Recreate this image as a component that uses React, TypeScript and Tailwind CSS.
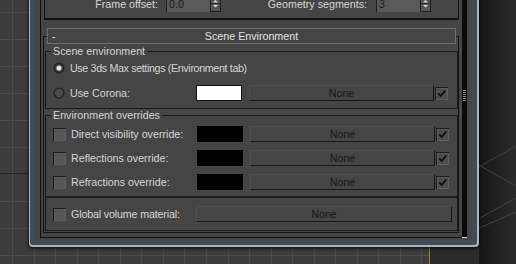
import React from "react"

const Radio = ({ on }: { on?: boolean }) => (
  <svg width="12" height="12" viewBox="0 0 12 12" className="shrink-0">
    <circle cx="6" cy="6" r="5.5" fill="#222" />
    <circle cx="6" cy="6" r="4.2" fill={on ? "#3a3a3a" : "#4c4c4c"} />
    {on && <circle cx="6" cy="6" r="2.6" fill="#e4e4e4" />}
  </svg>
)

const Check = ({ on }: { on?: boolean }) => (
  <svg width="13" height="13" viewBox="0 0 13 13" className="shrink-0">
    <rect x="0" y="0" width="13" height="13" fill="#1c1c1c" />
    <rect x="1" y="1" width="12" height="12" fill="#606060" />
    <rect x="1.5" y="1.5" width="10.5" height="10.5" fill={on ? "#4e4e4e" : "#575757"} />
    {on && <path d="M3.2 6.4 L5.6 9 L10.2 3.6" stroke="#0c0c0c" strokeWidth="1.7" fill="none" />}
  </svg>
)

const NoneBtn = ({ w }: { w: string }) => (
  <div className={`${w} h-[16px] shrink-0 flex items-center justify-center border border-t-[#505050] border-l-[#505050] border-r-[#161616] border-b-[#161616]`}>
    <span className="text-neutral-900">None</span>
  </div>
)

const Swatch = ({ white }: { white?: boolean }) =>
  white ? (
    <div className="w-[46px] h-[16px] shrink-0 border border-[#111] bg-white" />
  ) : (
    <div className="w-[46px] h-[16px] shrink-0 bg-black" />
  )

const Spinner = ({ value }: { value: string }) => (
  <div className="flex">
    <div className="w-[44px] h-[16px] bg-[#5a5a5a] border-t border-l border-[#1e1e1e] pl-[2px] flex items-center">
      <span className="text-neutral-900">{value}</span>
    </div>
    <svg width="11" height="16" viewBox="0 0 11 16">
      <rect x="0" y="0" width="11" height="16" fill="#1e1e1e" />
      <rect x="1" y="0" width="9" height="15" fill="#555" />
      <line x1="1" x2="10" y1="7.5" y2="7.5" stroke="#2a2a2a" />
      <path d="M3 6.5 L5.5 4 L8 6.5 Z" fill="#dcdcdc" />
      <path d="M3 9 L8 9 L5.5 11.5 Z" fill="#dcdcdc" />
    </svg>
  </div>
)

const Viewport = () => {
  const vx = Array.from({ length: 20 }, (_, i) => Math.round(12 + i * 21.55) + 0.5)
  const hy = [12, 39, 66, 93, 120, 147, 201, 228, 255]
  return (
    <svg className="absolute inset-0" width="516" height="264">
      <defs>
        <linearGradient id="sh" x1="0" x2="1" y1="0" y2="0">
          <stop offset="0" stopColor="#151515" />
          <stop offset="1" stopColor="#2b2b2b" />
        </linearGradient>
      </defs>
      <rect width="516" height="264" fill="#3c3c3c" />
      {vx.map((x) => (
        <line key={x} x1={x} x2={x} y1={0} y2={264} stroke="#4b4b4b" />
      ))}
      {hy.map((y) => (
        <line key={y} x1={0} x2={430} y1={y + 0.5} y2={y + 0.5} stroke="#4b4b4b" />
      ))}
      <line x1={0} x2={430} y1={173.5} y2={173.5} stroke="#262626" />
      <rect x="430" y="0" width="86" height="264" fill="#2b2b2b" />
      <rect x="479" y="0" width="37" height="264" fill="url(#sh)" />
      <g stroke="#454545" strokeWidth="1">
        <line x1="470" y1="172" x2="516" y2="146" />
        <line x1="470" y1="160" x2="516" y2="186" />
        <line x1="480" y1="218" x2="516" y2="198" />
        <line x1="470" y1="232" x2="516" y2="212" />
      </g>
      <line x1="429.5" x2="429.5" y1="0" y2="264" stroke="#9a843a" />
    </svg>
  )
}

const Row = ({ children, h }: { children: React.ReactNode; h: string }) => (
  <div className={`${h} flex items-center pl-[7px]`}>{children}</div>
)

export default function App() {
  return (
    <div className="relative w-[516px] h-[264px] overflow-hidden bg-[#3c3c3c] font-['Liberation_Sans',Arial,sans-serif] text-[10.7px] leading-none">
      <Viewport />
      <div className="absolute left-[29px] top-[-30px] w-[450px] rounded-b-[4px] bg-[#a9b5c1] pl-[1px] pr-[2px] pb-[2px] shadow-[0_1px_3px_1px_rgba(0,0,0,0.6)]">
        <div className="rounded-b-[3px] bg-[#414c58] px-[5px] pb-[5px]">
          <div className="flex bg-[#454545] px-[5px] pb-[2px]">
            <div className="flex-1 border-l border-b border-[#0e0e0e] pl-[2px] pr-[3px] pb-[4px] text-[#d6d6d6]">
              {/* previous rollout tail */}
              <div className="ml-[1px] h-[50px] border-l border-r border-b-2 border-[#111] flex flex-col justify-end pb-[6px]">
                <div className="flex items-center">
                  <div className="w-[113px] text-right">Frame offset:</div>
                  <div className="ml-[8px]">
                    <Spinner value="0.0" />
                  </div>
                  <div className="w-[146px] text-right">Geometry segments:</div>
                  <div className="ml-[9px]">
                    <Spinner value="3" />
                  </div>
                </div>
              </div>

              {/* Scene Environment rollout */}
              <div className="mt-[16px] border border-[#111] pb-[1px]">
                <div className="-mt-[9px] ml-[3px] mr-[2px] h-[16px] border border-[#707070] bg-[#454545] grid grid-cols-[1fr_auto_1fr] items-center text-[#e2e2e2]">
                  <span className="pl-[4px]">-</span>
                  <span>Scene Environment</span>
                  <span />
                </div>

                <fieldset className="mt-[1px] ml-[1px] border border-[#1b1b1b] pb-[5px]">
                  <legend className="ml-[5px] px-[2px] h-[13px] leading-[13px]">Scene environment</legend>
                  <Row h="h-[20px]">
                    <Radio on />
                    <span className="ml-[5px] tracking-[-0.35px]">Use 3ds Max settings (Environment tab)</span>
                  </Row>
                  <div className="mt-[5px]">
                    <Row h="h-[20px]">
                      <Radio />
                      <span className="ml-[5px] w-[126px]">Use Corona:</span>
                      <Swatch white />
                      <div className="ml-[7px]">
                        <NoneBtn w="w-[185px]" />
                      </div>
                      <div className="ml-[1px]">
                        <Check on />
                      </div>
                    </Row>
                  </div>
                </fieldset>

                <fieldset className="ml-[1px] border border-[#1b1b1b] pb-[2px]">
                  <legend className="ml-[5px] px-[2px] h-[13px] leading-[13px]">Environment overrides</legend>
                  {["Direct visibility override:", "Reflections override:", "Refractions override:"].map((l) => (
                    <Row key={l} h="h-[24px]">
                      <Check />
                      <span className="ml-[5px] w-[126px]">{l}</span>
                      <Swatch />
                      <div className="ml-[7px]">
                        <NoneBtn w="w-[185px]" />
                      </div>
                      <div className="ml-[1px]">
                        <Check on />
                      </div>
                    </Row>
                  ))}
                </fieldset>

                <div className="ml-[1px] border border-[#1b1b1b] py-[4px]">
                  <Row h="h-[24px]">
                    <Check />
                    <span className="ml-[5px] w-[125px] tracking-[-0.15px]">Global volume material:</span>
                    <NoneBtn w="w-[256px]" />
                  </Row>
                </div>
              </div>
            </div>

            {/* scrollbar */}
            <div className="w-[5px] bg-[#0a0a0a] flex flex-col">
              <div className="mt-[120px] ml-[1px] flex flex-col gap-[1px]">
                <div className="w-[3px] h-[1px] bg-[#8a8a8a]" />
                <div className="w-[3px] h-[1px] bg-[#8a8a8a]" />
                <div className="w-[3px] h-[1px] bg-[#8a8a8a]" />
                <div className="w-[3px] h-[1px] bg-[#8a8a8a]" />
                <div className="w-[3px] h-[1px] bg-[#8a8a8a]" />
                <div className="w-[3px] h-[1px] bg-[#8a8a8a]" />
              </div>
              <div className="flex-1" />
              <div className="h-[1px] bg-[#e0e0e0]" />
            </div>
          </div>
        </div>
      </div>
    </div>
  )
}
